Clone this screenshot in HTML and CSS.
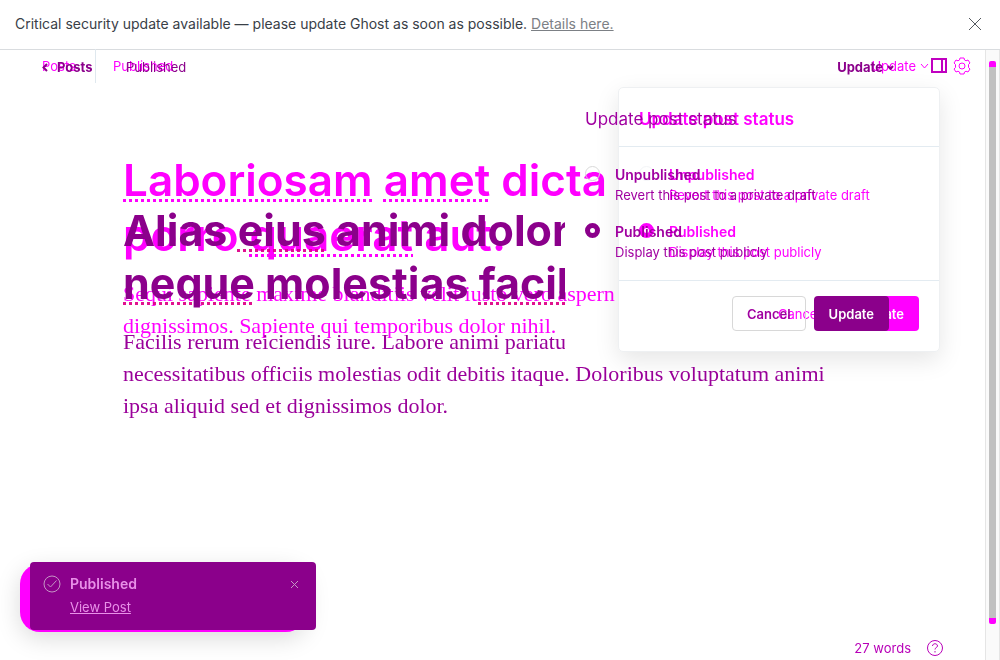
FILE: index.html
```html
<!DOCTYPE html>
<html lang="en">
<head>
<meta charset="utf-8">
<title>Post editor comparison</title>
<link rel="stylesheet" href="styles.css">
</head>
<body>
<aside class="banner">
  <p>Critical security update available — please update Ghost as soon as possible. <a href="#">Details here.</a></p>
  <button class="icon-button" aria-label="Close"><svg width="14" height="14" viewBox="0 0 14 14"><path d="M1 1l12 12M13 1L1 13"/></svg></button>
</aside>
<div class="app">
  <main class="stack">
    <section class="layer after">
      <header class="bar">
        <a class="back" href="#"><svg width="6" height="9" viewBox="0 0 6 9"><path d="M5 1L1.500 4.500 5 8"/></svg>Posts</a>
        <span class="state">Published</span>
        <button class="update">Update <svg width="7" height="5" viewBox="0 0 7 5"><path d="M1 1l2.500 3L6 1"/></svg></button>
      </header>
      <article class="doc">
        <div class="clip"><h1>Alias <u>eius</u> animi dolor<br><u>neque</u> molestias <u>facilis</u></h1>
        <p>Facilis rerum reiciendis iure. Labore animi pariatur</p></div>
        <p>necessitatibus officiis molestias odit debitis itaque. Doloribus voluptatum animi<br>ipsa aliquid sed et dignissimos dolor.</p>
      </article>
    </section>
    <section class="layer before">
      <header class="bar">
        <a class="back" href="#">Posts</a>
        <span class="state">Published</span>
        <button class="update">Update <svg width="9" height="6" viewBox="0 0 9 6"><path d="M1 1l3.500 4L8 1"/></svg></button>
        <button class="icon-button panel" aria-label="Sidebar"><svg width="16" height="15" viewBox="0 0 16 15"><path d="M1 1h14v13H1zM11 1v13"/></svg></button>
        <button class="icon-button" aria-label="Settings"><svg width="18" height="18" viewBox="0 0 18 18"><path d="M7 1h4l.5 2 1.500.8L15 3l2 3-1.500 1.500v3L17 12l-2 3-2-.8-1.500.8-.5 2H7l-.5-2-1.500-.8-2 .8-2-3 1.500-1.500v-3L1 6l2-3 2 .8L6.500 3z"/><circle cx="9" cy="9" r="3"/></svg></button>
      </header>
      <article class="doc">
        <h1><u>Laboriosam</u> <u>amet</u> dicta<br>porro <u>quaerat</u> aut.</h1>
        <p>Sequi sapiente maxime blanditiis velit iusto vero aspern<br>dignissimos. Sapiente qui temporibus dolor nihil.</p>
      </article>
    </section>
    <form class="menu menu-before">
      <h2>Update post status</h2>
      <div class="options">
        <label><input type="radio" name="b"><span><strong>Unpublished</strong><small>Revert this post to a private draft</small></span></label>
        <label><input type="radio" name="b" checked><span><strong>Published</strong><small>Display this post publicly</small></span></label>
      </div>
      <footer><button type="button" class="cancel">Cancel</button><button type="button" class="save">Update</button></footer>
    </form>
    <form class="menu menu-after">
      <h2>Update post status</h2>
      <div class="options">
        <label><input type="radio" name="a"><span><strong>Unpublished</strong><small>Revert this post to a private draft</small></span></label>
        <label><input type="radio" name="a" checked><span><strong>Published</strong><small>Display this post publicly</small></span></label>
      </div>
      <footer><button type="button" class="cancel">Cancel</button><button type="button" class="save">Update</button></footer>
    </form>
    <div class="toast-shade"></div>
    <aside class="toast">
      <svg width="18" height="18" viewBox="0 0 18 18"><circle cx="9" cy="9" r="8"/><path d="M4.500 9l3 3 6-6.500"/></svg>
      <div><strong>Published</strong><a href="#">View Post</a></div>
      <button class="icon-button" aria-label="Dismiss"><svg width="9" height="9" viewBox="0 0 9 9"><path d="M1 1l7 7M8 1L1 8"/></svg></button>
    </aside>
    <div class="words"><span>27 words</span><button class="icon-button" aria-label="Help"><svg width="18" height="18" viewBox="0 0 18 18"><circle cx="9" cy="9" r="7.500"/><path d="M6.500 7c0-3 5-3 5 0 0 1.500-2.500 1.500-2.500 3.500M9 12v1.500"/></svg></button></div>
  </main>
  <div class="scroll"><div class="thumb"></div></div>
</div>
</body>
</html>
```
FILE: styles.css
```css
* { box-sizing: border-box; }
body { margin: 0; height: 100vh; display: flex; flex-direction: column; background: #fff; overflow: hidden; font: 13px/18px Inter, sans-serif; color: #a000a0; }
h1, h2, p { margin: 0; }
a { color: inherit; }
button { font: inherit; color: inherit; background: none; border: 0; padding: 0; }
svg { display: block; fill: none; stroke: currentColor; stroke-width: 1; flex: none; }

.banner { display: flex; align-items: center; justify-content: space-between; height: 50px; flex: none; padding: 0 18px 2px 15px; border-bottom: 1px solid #d9dcdf; color: #394047; font-size: 14px; line-height: 20px; }
.banner a { color: #7c8085; }
.banner button { color: #555a60; }

.app { flex: 1; display: flex; min-height: 0; }
.stack { flex: 1; position: relative; display: grid; isolation: isolate; }
.layer { grid-area: 1 / 1; min-width: 0; }
.before { color: #f0f; mix-blend-mode: multiply; }
.after { color: #8b008b; }

.bar { display: flex; align-items: center; height: 34px; padding-left: 42px; }
.back { display: flex; align-items: center; text-decoration: none; }
.before .back { width: 54px; height: 34px; border-right: 1px solid #dfe8ee; }
.after .back { width: 84px; gap: 9px; font-weight: 700; }
.before .state { margin-left: 17px; }
.update { display: flex; align-items: center; gap: 4px; margin-left: auto; }
.before .bar { padding-right: 14px; padding-bottom: 2px; }
.before .icon-button { margin-left: 6px; }
.before .panel { margin: 0 0 2px 2px; color: #c000c0; }
.panel path { stroke-width: 2; }
.after .update { margin-right: 91px; font-weight: 700; }
.after .back path, .after .update path { stroke-width: 2; }

.doc { padding-left: 123px; white-space: nowrap; }
h1 u { text-decoration: underline dotted 3px; text-decoration-skip-ink: none; text-underline-offset: 3px; }
.before h1 { padding-top: 69px; font-size: 44px; line-height: 55px; font-weight: 600; }
.before p { padding-top: 15px; }
.after h1 { padding-top: 120px; font-size: 43px; line-height: 53px; font-weight: 700; }
.after h1 u { text-decoration-color: #e0128f; }
.after .clip p { padding-top: 16px; }
.clip { width: 442px; overflow: hidden; }
.doc p { font-family: "Liberation Serif", serif; font-size: 22px; line-height: 32px; }
.after p { color: #9a009a; }

.menu { position: absolute; top: 37px; width: 322px; }
.menu-before { right: 45px; color: #f0f; background: #fff; border: 1px solid #eef0f2; border-radius: 5px; box-shadow: 0 8px 24px #0000001a; }
.menu-after { right: 99px; color: #a000a0; border: 1px solid transparent; }
.menu h2 { height: 59px; padding: 19px 20px 0; font-size: 17px; line-height: 24px; font-weight: 600; border-bottom: 1px solid #e3ebf1; }
.menu-after h2 { font-weight: 400; border-color: transparent; }
.options { display: grid; gap: 17px; height: 134px; padding: 18px 20px; border-bottom: 1px solid #e3ebf1; align-content: start; }
.menu-after .options { border-color: transparent; }
.options label { display: flex; gap: 15px; height: 40px; }
.options input { appearance: none; flex: none; width: 15px; height: 15px; margin: 1px 0 0; border: 1px solid #d8d8d8; border-radius: 50%; }
.menu-before input { border-color: #f3f5f7; }
.options input:checked { border: 5px solid #f0f; }
.menu-after input:checked { border-color: #8b008b; }
.options span { display: grid; grid-template-rows: 20px 20px; line-height: 20px; white-space: nowrap; }
.options strong { font-size: 14px; font-weight: 600; }
.options small { font-size: 13px; font-weight: 400; }
.menu footer { display: flex; justify-content: flex-end; gap: 8px; padding: 15px 20px 20px; }
.menu .save { color: #fff; background: #8b008b; }
.menu footer button { height: 35px; padding: 0 14px; border-radius: 4px; font-weight: 600; border: 1px solid transparent; }
.menu-after footer { margin-right: -4px; padding-right: 0; }
.menu-after .cancel { border-color: #d8d8d8; }
.menu-before footer .cancel { font-weight: 400; }
.menu-before .save { background: #f0f; }

.toast, .toast-shade { position: absolute; height: 68px; width: 286px; }
.toast { left: 30px; bottom: 30px; display: flex; align-items: flex-start; gap: 9px; padding: 13px 17px 0 13px; border-radius: 4px; background: #8b008b; color: #c596c5; }
.toast-shade { left: 20px; bottom: 28px; border-radius: 20px; background: #f0f; box-shadow: 0 6px 24px #00000026; }
.toast div { flex: 1; display: grid; gap: 5px; justify-items: start; color: #e890e8; }
.toast strong { font-size: 14px; font-weight: 600; }
.toast button { margin-top: 5px; }
.words { position: absolute; right: 41px; bottom: 3px; display: flex; align-items: center; gap: 15px; color: #b800b8; }

.scroll { width: 15px; padding: 11px 3px 36px; background: #fafafa; border-left: 1px solid #e5e5e5; border-right: 1px solid #e5e5e5; }
.thumb { height: 100%; background: #c1c1c1; border: solid #f0f; border-width: 6px 0; border-radius: 2px; }
```
